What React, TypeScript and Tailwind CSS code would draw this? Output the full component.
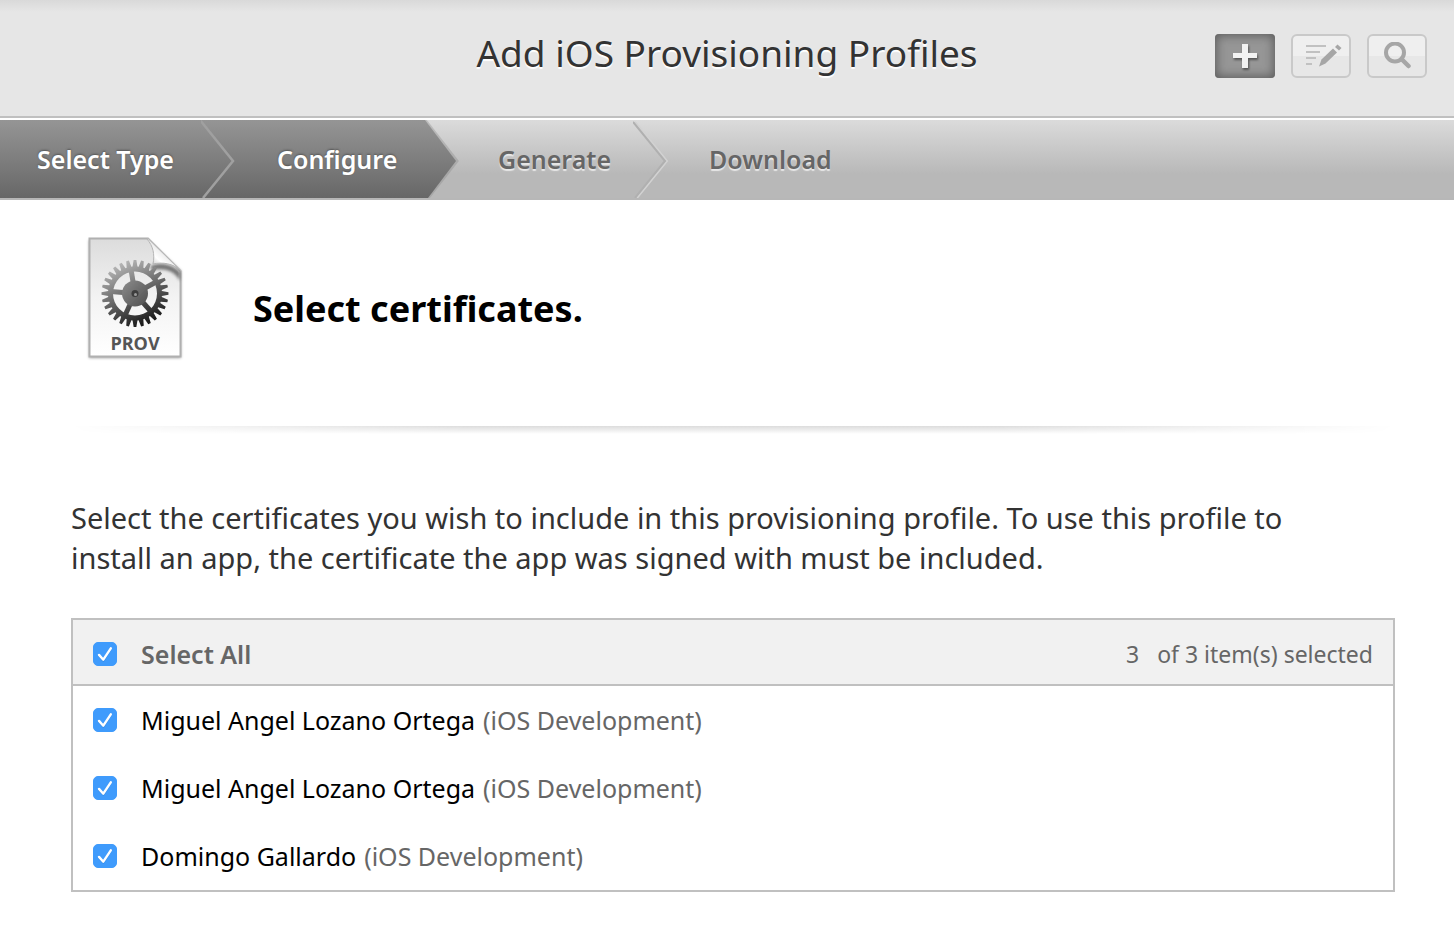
import { useState } from "react";
import type { InputHTMLAttributes } from "react";

const certificates = [
  { id: 1, name: "Miguel Angel Lozano Ortega", type: "iOS Development" },
  { id: 2, name: "Miguel Angel Lozano Ortega", type: "iOS Development" },
  { id: 3, name: "Domingo Gallardo", type: "iOS Development" },
];

function gearOutline(teeth: number, outer: number, inner: number) {
  const points: string[] = [];
  const step = (Math.PI * 2) / teeth;
  const corners: [number, number][] = [
    [-0.4, inner],
    [-0.18, outer],
    [0.18, outer],
    [0.4, inner],
  ];
  for (let i = 0; i < teeth; i++) {
    for (const [offset, radius] of corners) {
      const angle = (i + offset) * step;
      points.push(`${(Math.cos(angle) * radius).toFixed(2)},${(Math.sin(angle) * radius).toFixed(2)}`);
    }
  }
  return `M${points.join("L")}Z`;
}

const gearRing = `${gearOutline(28, 33.5, 27)}M22,0A22,22 0 1 0 -22,0A22,22 0 1 0 22,0Z`;

function ProfileIcon() {
  return (
    <svg className="h-[130px] w-[102px] shrink-0" viewBox="84 234 102 130" role="img" aria-label="Provisioning profile">
      <defs>
        <linearGradient id="paper" x1="0" y1="0" x2="0" y2="1">
          <stop offset="0" stopColor="#dcdcdc" />
          <stop offset="0.5" stopColor="#f3f3f3" />
          <stop offset="1" stopColor="#ffffff" />
        </linearGradient>
        <linearGradient id="gear" gradientUnits="userSpaceOnUse" x1="-14" y1="-30" x2="14" y2="30">
          <stop offset="0" stopColor="#b4b4b4" />
          <stop offset="0.45" stopColor="#6c6c6c" />
          <stop offset="1" stopColor="#181818" />
        </linearGradient>
        <linearGradient id="hub" x1="0" y1="0" x2="1" y2="1">
          <stop offset="0" stopColor="#8c8c8c" />
          <stop offset="1" stopColor="#4e4e4e" />
        </linearGradient>
        <linearGradient id="fold" gradientUnits="userSpaceOnUse" x1="152" y1="268" x2="166" y2="252">
          <stop offset="0" stopColor="#bdbdbd" />
          <stop offset="0.5" stopColor="#ffffff" />
          <stop offset="1" stopColor="#e6e6e6" />
        </linearGradient>
        <filter id="soft" x="-20%" y="-20%" width="140%" height="140%">
          <feGaussianBlur stdDeviation="1.6" />
        </filter>
        <filter id="smooth" x="-10%" y="-10%" width="120%" height="120%">
          <feGaussianBlur stdDeviation="0.6" />
        </filter>
      </defs>
      <path d="M89 240H148L181 271V358H89Z" fill="#777777" opacity="0.7" filter="url(#soft)" />
      <path d="M89.500 238.500H148L180.500 271V356.500H89.500Z" fill="url(#paper)" stroke="#b0b0b0" strokeWidth="2" />
      <path d="M151 266C160 262 172 264 180 272L180 281C174 270 164 268 151 270Z" fill="#444444" opacity="0.7" filter="url(#soft)" />
      <path d="M147 239C153 246 155 254 153 264C162 262 173 263 181 271L148 238.500Z" fill="url(#fold)" stroke="#b4b4b4" strokeWidth="1" />
      <g transform="translate(135 293.500)" filter="url(#smooth)">
        <path d={gearRing} fill="url(#gear)" fillRule="evenodd" />
        <g stroke="url(#gear)" strokeWidth="5">
          <path d="M0 0L-4 -24" />
          <path d="M0 0L22 -12" />
          <path d="M0 0L16 18" />
          <path d="M0 0L-10 22" />
          <path d="M0 0L-24 -2" />
        </g>
        <circle r="13" fill="url(#hub)" />
        <circle r="3.500" fill="#3e3e3e" />
        <circle cx="0.500" cy="1" r="1.500" fill="#9a9a9a" />
      </g>
      <text x="135" y="350" textAnchor="middle" fontSize="18" fontWeight="700" fill="#555555" fontFamily="'Open Sans', sans-serif">
        PROV
      </text>
    </svg>
  );
}

function Checkbox(props: InputHTMLAttributes<HTMLInputElement>) {
  return (
    <span className="grid size-6 shrink-0 place-items-center">
      <input
        type="checkbox"
        className="peer col-start-1 row-start-1 size-6 appearance-none rounded-[5px] border border-[#b5b5b5] bg-white checked:border-[#3f9bfc] checked:bg-[#3f9bfc]"
        {...props}
      />
      <svg className="pointer-events-none col-start-1 row-start-1 hidden size-6 peer-checked:block" viewBox="0 0 24 24" fill="none" aria-hidden="true">
        <path d="M6 13.700L10.300 18.500L17.800 6.700" stroke="#2372c8" strokeOpacity="0.4" strokeWidth="2.400" strokeLinecap="round" strokeLinejoin="round" />
        <path d="M6 12.900L10.300 17.700L17.800 6.300" stroke="#ffffff" strokeWidth="2.400" strokeLinecap="round" strokeLinejoin="round" />
      </svg>
    </span>
  );
}

function Chevron({ dark = false }: { dark?: boolean }) {
  return (
    <svg className="h-[78px] w-9 shrink-0" viewBox="0 0 36 78" fill="none" aria-hidden="true">
      {dark ? (
        <path d="M-1 0L32 41L2 78" stroke="#a0a0a0" strokeWidth="2.500" />
      ) : (
        <>
          <path d="M2 2L34 41L4 78" stroke="#d2d2d2" strokeWidth="2" />
          <path d="M0 2L32 41L2 78" stroke="#b0b0b0" strokeWidth="2" />
        </>
      )}
    </svg>
  );
}

export default function App() {
  const [selected, setSelected] = useState<number[]>(certificates.map((c) => c.id));
  const allSelected = selected.length === certificates.length;

  const toggle = (id: number) =>
    setSelected((current) => (current.includes(id) ? current.filter((c) => c !== id) : [...current, id]));

  return (
    <div className="min-h-screen bg-white font-['Noto_Sans','Open_Sans',sans-serif] text-black">
      <header className="grid h-[118px] grid-cols-[1fr_auto_1fr] items-start border-b-2 border-[#c0c0c0] bg-[linear-gradient(#d9d9d9,#e6e6e6_12px)] px-[27px]">
        <h1 className="col-start-2 pt-7 text-[37px] leading-[50px] text-[#333] [text-shadow:0_2px_1px_#fff]">
          Add iOS Provisioning Profiles
        </h1>
        <div className="flex justify-end gap-4 pt-[34px]">
          <button
            type="button"
            aria-label="Add"
            className="flex h-11 w-[60px] items-center justify-center rounded bg-[#969696] shadow-[inset_0_0_10px_2px_#606060]"
          >
            <svg className="size-8 [filter:drop-shadow(1px_2px_1px_#555)]" viewBox="0 0 32 32" aria-hidden="true">
              <path d="M13 4h6v9h9v5h-9v10h-6V18H4v-5h9z" fill="#f2f2f2" />
            </svg>
          </button>
          <button
            type="button"
            aria-label="Edit"
            className="flex h-11 w-[60px] items-center justify-center rounded-md border-2 border-[#c9c9c9] bg-[linear-gradient(#efefef_50%,#e7e7e7_50%)]"
          >
            <svg className="h-6 w-9 overflow-visible" viewBox="0 0 36 24" aria-hidden="true">
              <path d="M3 2h20M3 8h14M3 14h10M3 20h6" stroke="#c1c1c1" strokeWidth="2" />
              <path d="M16 22.500L18.500 15.500L30 4.500L34 8.500L22.500 19.500Z" fill="#a6a6a6" />
              <path d="M32 3L34.500 0.500L38.500 4L36 6.500Z" fill="#a6a6a6" />
            </svg>
          </button>
          <button
            type="button"
            aria-label="Search"
            className="flex h-11 w-[60px] items-center justify-center rounded-md border-2 border-[#c9c9c9] bg-[linear-gradient(#efefef_50%,#e7e7e7_50%)]"
          >
            <svg className="size-7" viewBox="0 0 28 28" fill="none" stroke="#a6a6a6" aria-hidden="true">
              <circle cx="12" cy="10.500" r="9" strokeWidth="4" />
              <path d="M18.500 17L25.500 24" strokeWidth="4.500" strokeLinecap="round" />
            </svg>
          </button>
        </div>
      </header>

      <nav
        aria-label="Progress"
        className="mt-0.5 flex h-20 border-b-2 border-[#b7b7b7] bg-[linear-gradient(#dbdbdb,#b8b8b8_54px)] text-[25px] leading-[78px] font-semibold"
      >
        <ol className="flex whitespace-nowrap">
          <li className="flex bg-[linear-gradient(#959595,#676767)] text-white [text-shadow:0_-1px_2px_#555]">
            <span className="w-[201px] pl-[37px]">Select Type</span>
            <Chevron dark />
          </li>
          <li aria-current="step" className="flex text-white [text-shadow:0_-1px_2px_#555]">
            <span className="w-[188px] bg-[linear-gradient(#959595,#676767)] pl-10">Configure</span>
            <svg className="h-[78px] w-9 shrink-0" viewBox="0 0 36 78" aria-hidden="true">
              <defs>
                <linearGradient id="step" x1="0" y1="0" x2="0" y2="1">
                  <stop offset="0" stopColor="#959595" />
                  <stop offset="1" stopColor="#676767" />
                </linearGradient>
              </defs>
              <path d="M0 0L32 41L3 78" fill="none" stroke="#888888" strokeOpacity="0.35" strokeWidth="3" />
              <path d="M0 0L31 41L3 78H0Z" fill="url(#step)" />
            </svg>
          </li>
          <li className="flex text-[#666] [text-shadow:0_2px_1px_#e8e8e8]">
            <span className="w-[172px] pl-[37px]">Generate</span>
            <Chevron />
          </li>
          <li className="pl-10 text-[#666] [text-shadow:0_2px_1px_#e8e8e8]">Download</li>
        </ol>
      </nav>

      <main className="pt-[34px] pr-[59px] pb-10 pl-[71px]">
        <div className="flex items-start gap-[67px] pl-[13px]">
          <ProfileIcon />
          <h2 className="pt-[50px] text-[36px] leading-[50px] font-bold">Select certificates.</h2>
        </div>

        <div className="mt-[62px] h-2 bg-[linear-gradient(#dcdcdc,#fff)] [mask-image:linear-gradient(90deg,transparent,#000_30%,#000_70%,transparent)]" />

        <p className="mt-16 max-w-[1240px] text-[29px] leading-10 text-[#333]">
          Select the certificates you wish to include in this provisioning profile. To use this profile to install an
          app, the certificate the app was signed with must be included.
        </p>

        <section className="mt-10 border-2 border-[#c0c0c0]" aria-label="Certificates">
          <div className="flex h-[66px] items-center justify-between border-b-2 border-[#c0c0c0] bg-[#f1f1f1] px-5 pt-1 text-[#666]">
            <label className="flex items-center gap-6 text-[25px] leading-8 font-semibold">
              <Checkbox
                checked={allSelected}
                onChange={() => setSelected(allSelected ? [] : certificates.map((c) => c.id))}
              />
              Select All
            </label>
            <p className="flex gap-[18px] text-[23px] leading-8">
              <span>{selected.length}</span>
              <span>of {certificates.length} item(s) selected</span>
            </p>
          </div>
          <ul>
            {certificates.map((cert) => (
              <li key={cert.id}>
                <label className="flex h-[68px] items-center gap-6 px-5 text-[25px] leading-8">
                  <Checkbox checked={selected.includes(cert.id)} onChange={() => toggle(cert.id)} />
                  <span className="flex gap-2">
                    <span>{cert.name}</span>
                    <span className="text-[#666]">({cert.type})</span>
                  </span>
                </label>
              </li>
            ))}
          </ul>
        </section>
      </main>
    </div>
  );
}
